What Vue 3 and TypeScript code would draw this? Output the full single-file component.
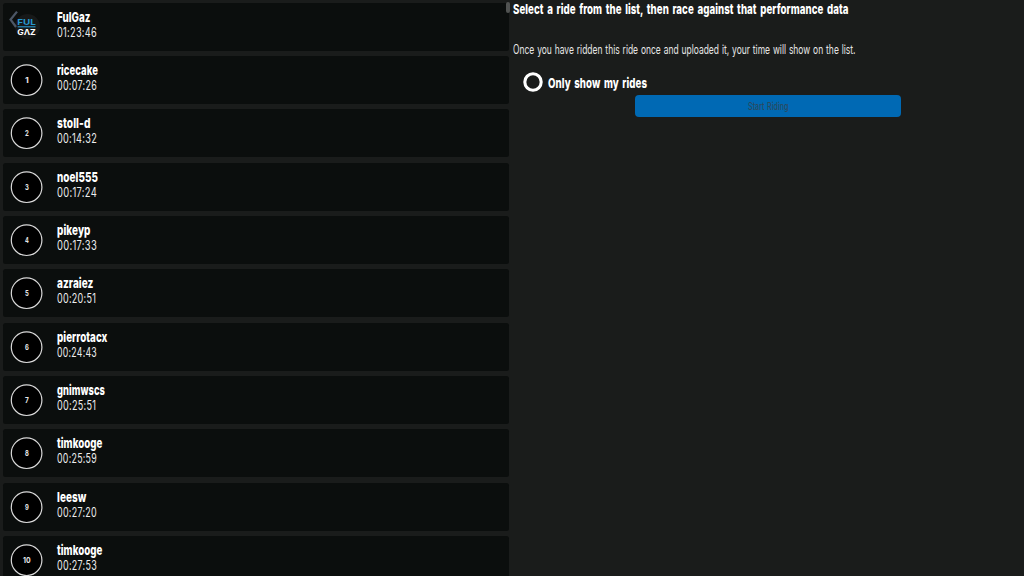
<script setup lang="ts">
interface Ride {
  name: string
  time: string
  nameWidth: number
  timeWidth: number
}

const rides: Ride[] = [
  { name: 'FulGaz', time: '01:23:46', nameWidth: 33.5, timeWidth: 40 },
  { name: 'ricecake', time: '00:07:26', nameWidth: 41, timeWidth: 40 },
  { name: 'stoll-d', time: '00:14:32', nameWidth: 33.5, timeWidth: 40 },
  { name: 'noel555', time: '00:17:24', nameWidth: 41, timeWidth: 40 },
  { name: 'pikeyp', time: '00:17:33', nameWidth: 33.5, timeWidth: 40 },
  { name: 'azraiez', time: '00:20:51', nameWidth: 36.5, timeWidth: 39.2 },
  { name: 'pierrotacx', time: '00:24:43', nameWidth: 50.5, timeWidth: 40 },
  { name: 'gnimwscs', time: '00:25:51', nameWidth: 48, timeWidth: 39.2 },
  { name: 'timkooge', time: '00:25:59', nameWidth: 45.5, timeWidth: 40 },
  { name: 'leesw', time: '00:27:20', nameWidth: 29.5, timeWidth: 40 },
  { name: 'timkooge', time: '00:27:53', nameWidth: 45.5, timeWidth: 40 },
]
</script>

<template>
  <main class="screen">
    <section class="list">
      <article v-for="(ride, i) in rides" :key="i" class="row">
        <svg v-if="i === 0" class="badge" viewBox="0 0 48 48">
          <circle cx="24.5" cy="23.5" r="12.5" fill="#171919" />
          <path d="M14 8.6 L7.6 16.6 L13 24" fill="none" stroke="#4c5665" stroke-width="2.3" />
          <text class="logo" x="14.2" y="22.3" fill="#2795cc" textLength="18.6" lengthAdjust="spacingAndGlyphs">FUL</text>
          <path d="M14.6 23.8 H32.5" stroke="#2795cc" stroke-width="1.1" />
          <text class="logo" x="14.2" y="31.5" fill="#fff" textLength="18.6" lengthAdjust="spacingAndGlyphs">GΛZ</text>
        </svg>
        <svg v-else class="badge" viewBox="0 0 48 48">
          <circle cx="23.6" cy="24.2" r="15.3" fill="#000" stroke="#d8d8d8" stroke-width="1.2" />
          <text class="rank" x="23.8" y="27.2" text-anchor="middle" :textLength="i > 9 ? 7.6 : 3.8" lengthAdjust="spacingAndGlyphs">{{ i }}</text>
        </svg>
        <svg class="info" viewBox="0 0 200 48">
          <text class="name" x="0" y="19.4" :textLength="ride.nameWidth" lengthAdjust="spacingAndGlyphs">{{ ride.name }}</text>
          <text class="time" x="0" y="34.4" :textLength="ride.timeWidth" lengthAdjust="spacingAndGlyphs">{{ ride.time }}</text>
        </svg>
      </article>
      <div class="thumb"></div>
    </section>
    <section class="panel">
      <svg class="heading" viewBox="0 0 511 20">
        <text class="strong" x="0" y="13.7" textLength="335.5" lengthAdjust="spacingAndGlyphs">Select a ride from the list, then race against that performance data</text>
      </svg>
      <svg class="hint" viewBox="0 0 511 20">
        <text class="light" x="0" y="14" textLength="342.5" lengthAdjust="spacingAndGlyphs">Once you have ridden this ride once and uploaded it, your time will show on the list.</text>
      </svg>
      <label class="option">
        <svg class="radio" viewBox="0 0 20 20">
          <circle cx="10" cy="10" r="8.2" fill="none" stroke="#fff" stroke-width="3.1" />
        </svg>
        <svg class="caption" viewBox="0 0 180 20">
          <text class="strong" x="0" y="16.4" textLength="99" lengthAdjust="spacingAndGlyphs">Only show my rides</text>
        </svg>
      </label>
      <button class="start" type="button">
        <svg class="start-text" viewBox="0 0 40 20">
          <text class="start-label" x="0" y="14.2" textLength="40.5" lengthAdjust="spacingAndGlyphs">Start Riding</text>
        </svg>
      </button>
    </section>
  </main>
</template>

<style>
body {
  margin: 0;
  background: #1a1c1b;
  overflow: hidden;
}
</style>

<style scoped>
.screen {
  display: grid;
  grid-template-columns: 513px 1fr;
  width: 1024px;
  height: 576px;
  overflow: hidden;
  background: #1a1c1b;
  font-family: Inter, Roboto, 'Liberation Sans', sans-serif;
}
svg {
  display: block;
  flex: none;
  overflow: visible;
}
.list {
  position: relative;
  display: flex;
  flex-direction: column;
  gap: 5.333px;
  height: 573.333px;
  padding: 2.667px 4px 0 3px;
}
.row {
  display: flex;
  flex: none;
  gap: 6px;
  height: 48px;
  border-radius: 2.5px;
  background: #0b0e0d;
}
.badge {
  width: 48px;
  height: 48px;
}
.info {
  width: 200px;
  height: 48px;
}
.name {
  font-size: 13.8px;
  font-weight: 800;
  letter-spacing: 0.1px;
  fill: #fff;
}
.time {
  font-size: 12.8px;
  font-weight: 400;
  letter-spacing: 0.4px;
  fill: #ededed;
}
.rank {
  font-size: 8px;
  font-weight: 700;
  fill: #e8e8e8;
}
.logo {
  font-size: 8px;
  font-weight: 700;
}
.thumb {
  position: absolute;
  top: 2px;
  left: 506px;
  width: 4px;
  height: 11px;
  border-radius: 2px;
  background: #515352;
}
.panel {
  display: flex;
  flex-direction: column;
}
.heading {
  width: 511px;
  height: 20px;
}
.hint {
  width: 511px;
  height: 20px;
  margin-top: 20px;
}
.option {
  display: flex;
  gap: 5px;
  height: 20px;
  margin: 11.6px 0 0 10.3px;
}
.radio {
  width: 20px;
  height: 20px;
}
.caption {
  width: 180px;
  height: 20px;
}
.strong {
  font-size: 13.8px;
  font-weight: 800;
  letter-spacing: 0.1px;
  word-spacing: 2px;
  fill: #fff;
}
.light {
  font-size: 12.6px;
  font-weight: 400;
  word-spacing: 0.8px;
  fill: #e6e6e6;
}
.start {
  display: flex;
  align-items: center;
  justify-content: center;
  width: 266.5px;
  height: 21.5px;
  margin: 3.8px 0 0 121.6px;
  padding: 0;
  border: 0;
  border-radius: 4px;
  background: #0069b4;
  font-family: inherit;
}
.start-text {
  width: 40px;
  height: 20px;
}
.start-label {
  font-size: 11px;
  font-weight: 500;
  word-spacing: 1px;
  fill: #2a4960;
}
</style>
